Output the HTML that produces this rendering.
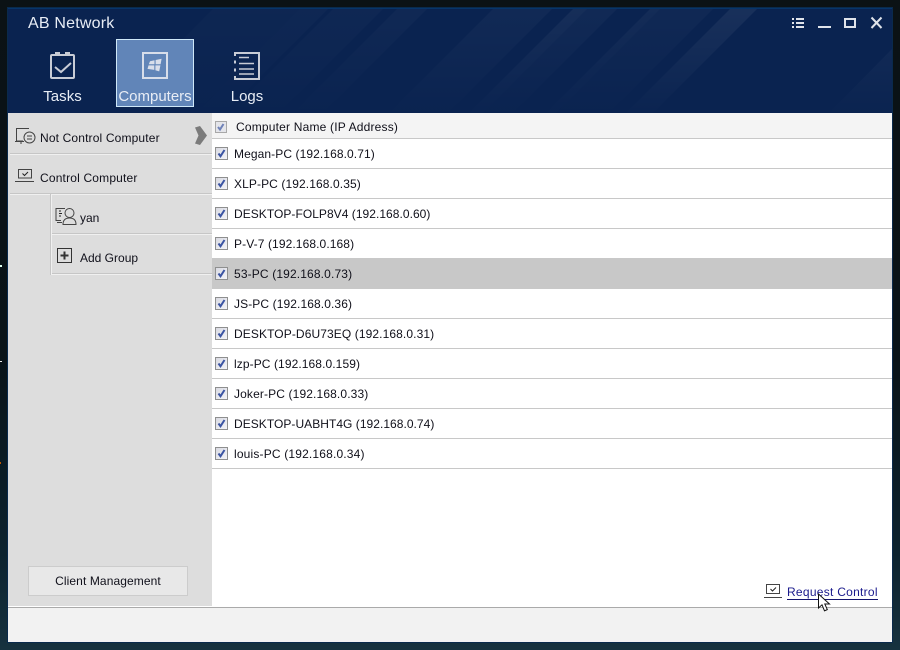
<!DOCTYPE html>
<html><head><meta charset="utf-8"><title>AB Network</title>
<style>
html,body{margin:0;padding:0;width:900px;height:650px;overflow:hidden;background:#0a1216;font-family:"Liberation Sans",Arial,sans-serif;}
.a{position:absolute}
#bg{left:0;top:0;width:900px;height:650px;background:linear-gradient(180deg,#0b1215 0,#091318 55%,#0c222e 85%,#17323f 100%)}
#frame{left:7px;top:7px;width:886px;height:636px;background:#0a2a4c}
#win{left:8px;top:8px;width:884px;height:634px;background:#fff;overflow:hidden}
#hd{left:0;top:0;width:884px;height:105px;background:#0a2350;border-top:1px solid #06356a;box-sizing:border-box;overflow:hidden}
.t{color:#e8edf5;font-size:15px;white-space:nowrap;text-align:center}
#side{left:0;top:105px;width:204px;height:493px;background:#ddd}
.sl{color:#10101a;font-size:12px;white-space:nowrap}
.ln{height:2px;background:#f0f0f0;border-top:1px solid #c6c6c6;box-sizing:border-box}
.row{left:204px;width:680px;height:30px;border-bottom:1px solid #c8c8c8;box-sizing:border-box;color:#10101a;font-size:12px;line-height:30px;padding-left:22px;white-space:nowrap}
.cb{position:absolute;left:3px;top:8px;width:13px;height:13px;border:1px solid #8e8f8f;background:linear-gradient(135deg,#d9dae2,#f4f4f8);box-sizing:border-box}
.cb svg{position:absolute;left:0;top:0}
</style></head><body>
<div class="a" id="bg"></div>
<div class="a" style="left:0;top:265px;width:2px;height:2px;background:#dfe"></div>
<div class="a" style="left:0;top:361px;width:2px;height:1px;background:#eee"></div>
<div class="a" style="left:0;top:462px;width:1px;height:2px;background:#b50"></div>
<div class="a" id="frame"></div>
<div class="a" id="win">
 <div class="a" id="hd">
  <svg class="a" style="left:0;top:0" width="884" height="105" viewBox="0 0 884 105">
   <defs><linearGradient id="g" x1="0" y1="0" x2="0" y2="1"><stop offset="0" stop-color="#fff" stop-opacity="1"/><stop offset="1" stop-color="#fff" stop-opacity=".05"/></linearGradient></defs>
   <g fill="url(#g)">
    <polygon points="205,0 292,0 187,105 100,105" opacity=".015"/>
    <polygon points="292,0 320,0 215,105 187,105" opacity=".02"/>
    <polygon points="325,0 375,0 270,105 220,105" opacity=".02"/>
    <polygon points="389,0 419,0 314,105 284,105" opacity=".025"/>
    <polygon points="485,0 544,0 439,105 380,105" opacity=".03"/>
    <polygon points="565,0 579,0 474,105 460,105" opacity=".05"/>
    <polygon points="579,0 609,0 504,105 474,105" opacity=".03"/>
    <polygon points="642,0 652,0 547,105 537,105" opacity=".04"/>
    <polygon points="652,0 705,0 600,105 547,105" opacity=".025"/>
    <polygon points="722,0 749,0 644,105 617,105" opacity=".06"/>
    <polygon points="884,40 884,105 820,105" opacity=".03"/>
   </g>
  </svg>
  <div class="a" style="left:20px;top:5px;color:#e8edf5;font-size:16px;line-height:20px;white-space:nowrap;letter-spacing:.2px">AB Network</div>
  <svg class="a" style="left:42px;top:43px" width="25" height="27" viewBox="0 0 25 27" fill="none" stroke="#c8ccd6">
   <rect x="1" y="3" width="23" height="23" rx="1" stroke-width="2"/>
   <path d="M5 1.500h5M15 1.500h5" stroke-width="3"/>
   <path d="M5 15l6 5 10-9" stroke-width="2"/>
  </svg>
  <div class="a" style="left:108px;top:30px;width:78px;height:68px;background:#6185b8;border:1px solid #cfe8f8;box-sizing:border-box"></div>
  <svg class="a" style="left:134px;top:43px" width="26" height="27" viewBox="0 0 26 27" fill="none">
   <rect x="1" y="1" width="24" height="25" stroke="#d8deea" stroke-width="2"/>
   <path d="M8 9.300l4.500-1v3.900H6.800zM13.600 8l6-1.200-1 5.400h-5zM6.500 13.400h5.800v4.500l-6.800-1zM13.400 13.400h5l-1.200 6-3.800-1.100z" fill="#d8deea"/>
  </svg>
  <svg class="a" style="left:226px;top:43px" width="26" height="28" viewBox="0 0 26 28" fill="none" stroke="#c8ccd6">
   <path d="M1 4V1h24v26H1v-3M1 8.500v3M1 16.500v3" stroke-width="2"/>
   <path d="M5 5.500h10M5 11.500h15M5 17h15M5 22h15" stroke-width="1.400"/>
  </svg>
  <div class="a t" style="left:25px;top:79px;width:59px;letter-spacing:.05px">Tasks</div>
  <div class="a t" style="left:108px;top:79px;width:78px">Computers</div>
  <div class="a t" style="left:209px;top:79px;width:60px">Logs</div>
  <svg class="a" style="left:784px;top:7px" width="92" height="16" viewBox="0 0 92 16" fill="#dfe3ea">
   <path d="M0 2h2v2H0zM4 2h8v2H4zM0 6h2v2H0zM4 6h8v2H4zM0 10h2v2H0zM4 10h8v2H4z"/>
   <rect x="26" y="10" width="13" height="2"/>
   <path d="M52 2h12v10H52zM54 4v6h8V4z" fill-rule="evenodd"/>
   <path d="M79.500 1.500l10 10.500M89.500 1.500l-10 10.500" stroke="#dfe3ea" stroke-width="2" fill="none"/>
  </svg>
 </div>

 <div class="a" style="left:0;top:105px;width:884px;height:493px;background:#fff"></div>
 <div class="a" id="side"></div>
 <div class="a ln" style="left:2px;top:145px;width:202px"></div>
 <div class="a ln" style="left:2px;top:185px;width:202px"></div>
 <div class="a ln" style="left:43px;top:225px;width:161px"></div>
 <div class="a ln" style="left:43px;top:265px;width:161px"></div>
 <div class="a" style="left:42px;top:186px;width:2px;height:81px;background:#f0f0f0;border-left:1px solid #c6c6c6;box-sizing:border-box"></div>

 <svg class="a" style="left:7px;top:120px" width="22" height="20" viewBox="0 0 22 20" fill="none" stroke="#444" stroke-width="1">
  <path d="M14 .5H1.500v12.500H8M0 13.500h9M6 14v2"/>
  <circle cx="14.500" cy="9.500" r="5.500"/>
  <path d="M12 8h5M12 11h5"/>
 </svg>
 <div class="a sl" style="left:32px;top:123px;letter-spacing:.15px">Not Control Computer</div>
 <svg class="a" style="left:186px;top:118px" width="14" height="19" viewBox="0 0 14 19"><path d="M1 1.500L6 0 13 9.500 6 19 1 17.500 4.500 9.500z" fill="#7b7b7b"/></svg>

 <svg class="a" style="left:7px;top:160px" width="20" height="15" viewBox="0 0 20 15" fill="none" stroke="#444" stroke-width="1">
  <rect x="3.500" y="1.500" width="13" height="8.500"/>
  <path d="M0 13.500h19"/>
  <path d="M7.500 5.500l2 2 3.500-3.500" stroke="#222"/>
 </svg>
 <div class="a sl" style="left:32px;top:163px;letter-spacing:.18px">Control Computer</div>

 <svg class="a" style="left:47px;top:199px" width="22" height="19" viewBox="0 0 22 19" fill="none" stroke="#444" stroke-width="1">
  <path d="M10 1.500H1v12h5M2 15.500h5"/>
  <circle cx="14.500" cy="6" r="4.500"/>
  <path d="M8 17.500c0-4.500 2.500-6.500 6.500-6.500s6.500 2 6.500 6.500z"/>
  <path d="M4 4h2M4 6.500h3M4 9h2" stroke="#222"/>
 </svg>
 <div class="a sl" style="left:72px;top:203px">yan</div>

 <svg class="a" style="left:49px;top:240px" width="16" height="16" viewBox="0 0 16 16" fill="none" stroke="#333">
  <rect x=".5" y=".5" width="14" height="14"/>
  <path d="M7.500 3.500v8M3.500 7.500h8" stroke-width="2"/>
 </svg>
 <div class="a sl" style="left:72px;top:243px">Add Group</div>

 <div class="a" style="left:20px;top:558px;width:160px;height:30px;background:#e8e8e8;border:1px solid #ccc;box-sizing:border-box;font-size:12px;color:#10101a;text-align:center;line-height:28px;letter-spacing:.1px">Client Management</div>

 <div class="a" style="left:204px;top:105px;width:680px;height:26px;background:#f4f4f4;border-bottom:1px solid #c8c8c8;box-sizing:border-box;font-size:12px;color:#10101a;line-height:28px;padding-left:24px;white-space:nowrap;letter-spacing:.19px">
  <div class="cb" style="left:3px;top:8px;width:12px;height:12px;background:#e4e5ea;border-color:#a8a8a8"><svg width="10" height="10" viewBox="0 0 10 10"><path d="M2 5l2 2.500 3.500-5.500" fill="none" stroke="#6f82b8" stroke-width="2"/></svg></div>Computer Name (IP Address)</div>

 <div class="a row" style="top:131px;letter-spacing:.09px"><div class="cb"><svg width="11" height="11" viewBox="0 0 11 11"><path d="M2.500 5.500l2 2.700 4-6.200" fill="none" stroke="#3b54a3" stroke-width="2"/></svg></div>Megan-PC (192.168.0.71)</div>
 <div class="a row" style="top:161px;letter-spacing:.1px"><div class="cb"><svg width="11" height="11" viewBox="0 0 11 11"><path d="M2.500 5.500l2 2.700 4-6.200" fill="none" stroke="#3b54a3" stroke-width="2"/></svg></div>XLP-PC (192.168.0.35)</div>
 <div class="a row" style="top:191px;letter-spacing:.04px"><div class="cb"><svg width="11" height="11" viewBox="0 0 11 11"><path d="M2.500 5.500l2 2.700 4-6.200" fill="none" stroke="#3b54a3" stroke-width="2"/></svg></div>DESKTOP-FOLP8V4 (192.168.0.60)</div>
 <div class="a row" style="top:221px;letter-spacing:.1px"><div class="cb"><svg width="11" height="11" viewBox="0 0 11 11"><path d="M2.500 5.500l2 2.700 4-6.200" fill="none" stroke="#3b54a3" stroke-width="2"/></svg></div>P-V-7 (192.168.0.168)</div>
 <div class="a row" style="top:251px;background:#c8c8c8;letter-spacing:.14px"><div class="cb"><svg width="11" height="11" viewBox="0 0 11 11"><path d="M2.500 5.500l2 2.700 4-6.200" fill="none" stroke="#3b54a3" stroke-width="2"/></svg></div>53-PC (192.168.0.73)</div>
 <div class="a row" style="top:281px;letter-spacing:.1px"><div class="cb"><svg width="11" height="11" viewBox="0 0 11 11"><path d="M2.500 5.500l2 2.700 4-6.200" fill="none" stroke="#3b54a3" stroke-width="2"/></svg></div>JS-PC (192.168.0.36)</div>
 <div class="a row" style="top:311px;letter-spacing:.1px"><div class="cb"><svg width="11" height="11" viewBox="0 0 11 11"><path d="M2.500 5.500l2 2.700 4-6.200" fill="none" stroke="#3b54a3" stroke-width="2"/></svg></div>DESKTOP-D6U73EQ (192.168.0.31)</div>
 <div class="a row" style="top:341px;letter-spacing:.09px"><div class="cb"><svg width="11" height="11" viewBox="0 0 11 11"><path d="M2.500 5.500l2 2.700 4-6.200" fill="none" stroke="#3b54a3" stroke-width="2"/></svg></div>lzp-PC (192.168.0.159)</div>
 <div class="a row" style="top:371px;letter-spacing:.13px"><div class="cb"><svg width="11" height="11" viewBox="0 0 11 11"><path d="M2.500 5.500l2 2.700 4-6.200" fill="none" stroke="#3b54a3" stroke-width="2"/></svg></div>Joker-PC (192.168.0.33)</div>
 <div class="a row" style="top:401px;letter-spacing:.04px"><div class="cb"><svg width="11" height="11" viewBox="0 0 11 11"><path d="M2.500 5.500l2 2.700 4-6.200" fill="none" stroke="#3b54a3" stroke-width="2"/></svg></div>DESKTOP-UABHT4G (192.168.0.74)</div>
 <div class="a row" style="top:431px;letter-spacing:.17px"><div class="cb"><svg width="11" height="11" viewBox="0 0 11 11"><path d="M2.500 5.500l2 2.700 4-6.200" fill="none" stroke="#3b54a3" stroke-width="2"/></svg></div>louis-PC (192.168.0.34)</div>

 <svg class="a" style="left:756px;top:576px" width="20" height="15" viewBox="0 0 20 15" fill="none" stroke="#444">
  <rect x="2.500" y=".5" width="13" height="9"/>
  <path d="M0 13.500h18"/>
  <path d="M6.500 5l2 2 3.500-3.500" stroke="#222"/>
 </svg>
 <div class="a" style="left:779px;top:576px;width:91px;height:15px;font-size:12px;line-height:16px;color:#1a1a8c;border-bottom:1px solid #14146e;box-sizing:content-box;white-space:nowrap;letter-spacing:.27px">Request Control</div>

 <div class="a" style="left:0;top:599px;width:884px;height:35px;background:#f2f2f2;border-top:1px solid #aaa;box-sizing:border-box"></div>

 <svg class="a" style="left:809px;top:585px" width="16" height="20" viewBox="0 0 16 20">
  <path d="M1.500 1v14l3.500-3.200 2.500 6 2.800-1.200-2.500-5.600h4.700z" fill="#fff" stroke="#111" stroke-width="1"/>
 </svg>
</div>
</body></html>
